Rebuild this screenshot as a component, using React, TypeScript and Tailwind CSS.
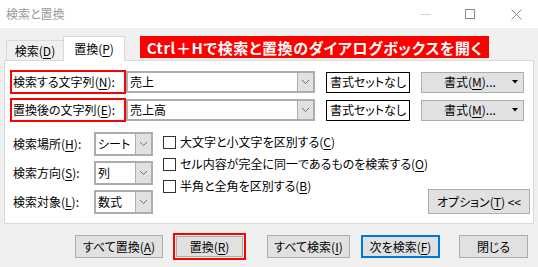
import React from "react";

const Chevron = () => (
  <svg width="9" height="6" viewBox="0 0 9 6" fill="none">
    <path d="M1 1 L4.5 4.5 L8 1" stroke="#6d6d6d" strokeWidth="1" />
  </svg>
);

const ComboArrow = () => (
  <div className="w-[16px] h-full bg-[#e1e1e1] border-l border-[#adadad] flex items-center justify-center shrink-0">
    <Chevron />
  </div>
);

const Acc = ({ k }: { k: string }) => <span className="underline underline-offset-[2px]">{k}</span>;

const selects = [
  { label: "検索場所", k: "H", value: "シート" },
  { label: "検索方向", k: "S", value: "列" },
  { label: "検索対象", k: "L", value: "数式" },
];

const checks = [
  { text: "大文字と小文字を区別する", k: "C" },
  { text: "セル内容が完全に同一であるものを検索する", k: "O" },
  { text: "半角と全角を区別する", k: "B" },
];

export default function App() {
  return (
    <div className="w-[538px] h-[267px] bg-[#f0f0f0] font-['Noto_Sans_CJK_JP','Noto_Sans',sans-serif] text-[12px] leading-none text-black flex flex-col overflow-hidden whitespace-nowrap [font-feature-settings:'palt']">
      {/* Title bar */}
      <div className="h-[28px] bg-white flex items-center pl-[6px] shrink-0">
        <span className="text-[#9a9a9a]">検索と置換</span>
        <div className="ml-auto flex items-center h-full">
          <div className="w-[11px] h-px bg-[#cfcfcf] mr-[34px]" />
          <div className="w-[10px] h-[10px] border border-[#8a8a8a] mr-[36px]" />
          <svg width="11" height="11" viewBox="0 0 11 11" className="mr-[16px]">
            <path d="M0.5 0.5 L10.5 10.5 M10.5 0.5 L0.5 10.5" stroke="#8a8a8a" strokeWidth="1" />
          </svg>
        </div>
      </div>

      {/* Tabs */}
      <div className="h-[32px] flex items-end px-[6px] shrink-0">
        <div className="w-[57px] h-[20px] border-t border-l border-[#d9d9d9] flex items-center justify-center pt-[1px]">
          検索(<Acc k="D" />)
        </div>
        <div className="relative z-10 w-[62px] h-[25px] -mb-px bg-white border-t border-l border-r border-[#d9d9d9] flex items-center justify-center pb-[1px]">
          置換(<Acc k="P" />)
        </div>
        <div className="self-start mt-[8px] ml-[15px] w-[349px] h-[22px] bg-[#ff0000] text-white text-[15px] font-semibold flex items-center justify-center tracking-[0.6px]">
          Ctrl＋Hで検索と置換のダイアログボックスを開く
        </div>
      </div>

      {/* Panel */}
      <div className="mx-[4px] h-[164px] bg-white border border-[#d9d9d9] pt-[9px] pl-[5px] shrink-0">
        {[
          { label: "検索する文字列", k: "N", value: "売上" },
          { label: "置換後の文字列", k: "E", value: "売上高" },
        ].map((row, i) => (
          <div key={row.k} className={`flex items-center h-[24px] ${i === 1 ? "mt-[4px]" : ""}`}>
            <div className="w-[116px] h-[24px] border-2 border-[#ff0000] flex items-center pl-[1px] shrink-0">
              {row.label}(<Acc k={row.k} />):
            </div>
            <div className="w-[189px] h-[22px] border-2 border-[#adadad] flex items-center shrink-0">
              <span className="flex-1 pl-[2px]">{row.value}</span>
              <ComboArrow />
            </div>
            <div className="ml-[11px] w-[84px] h-[21px] border border-black flex items-center justify-center shrink-0">
              書式セットなし
            </div>
            <div className="ml-[11px] w-[103px] h-[21px] bg-[#e1e1e1] border border-[#adadad] flex items-center pl-[22px] pr-[5px] shrink-0">
              <span>書式(<Acc k="M" />)...</span>
              <svg width="6" height="4" viewBox="0 0 6 4" className="ml-auto">
                <path d="M0 0 H6 L3 3.5 Z" fill="#000" />
              </svg>
            </div>
          </div>
        ))}

        <div className="flex mt-[10px]">
          <div className="flex flex-col gap-[5px] shrink-0">
            {selects.map((s) => (
              <div key={s.k} className="flex items-center h-[24px]">
                <span className="w-[84px] pl-[3px]">
                  {s.label}(<Acc k={s.k} />):
                </span>
                <div className="w-[59px] h-[24px] border-2 border-[#adadad] flex items-center">
                  <span className="flex-1 pl-[2px]">{s.value}</span>
                  <ComboArrow />
                </div>
              </div>
            ))}
          </div>
          <div className="ml-[10px] flex flex-col -mt-px">
            {checks.map((c) => (
              <div key={c.k} className="h-[22px] flex items-center">
                <div className="w-[13px] h-[13px] border border-[#333] bg-white mr-[4px] shrink-0" />
                <span>
                  {c.text}(<Acc k={c.k} />)
                </span>
              </div>
            ))}
          </div>
          <div className="ml-auto mr-[9px] self-end w-[102px] h-[25px] bg-[#e1e1e1] border border-[#adadad] flex items-center justify-center shrink-0">
            オプション(<Acc k="T" />) &lt;&lt;
          </div>
        </div>
      </div>

      {/* Bottom buttons */}
      <div className="flex items-center pl-[75px] mt-[9px]">
        <div className="w-[88px] h-[23px] bg-[#e1e1e1] border border-[#adadad] flex items-center justify-center">
          すべて置換(<Acc k="A" />)
        </div>
        <div className="ml-[10px] w-[73px] h-[27px] border-2 border-[#ff0000] p-px">
          <div className="w-full h-full bg-[#e1e1e1] border border-[#adadad] flex items-center justify-center">
            置換(<Acc k="R" />)
          </div>
        </div>
        <div className="ml-[21px] w-[83px] h-[23px] bg-[#e1e1e1] border border-[#adadad] flex items-center justify-center">
          すべて検索(<Acc k="I" />)
        </div>
        <div className="ml-[11px] w-[79px] h-[23px] bg-[#e1e1e1] border-2 border-[#0078d7] flex items-center justify-center">
          次を検索(<Acc k="F" />)
        </div>
        <div className="ml-[19px] w-[69px] h-[23px] bg-[#e1e1e1] border border-[#adadad] flex items-center justify-center">
          閉じる
        </div>
      </div>
    </div>
  );
}
